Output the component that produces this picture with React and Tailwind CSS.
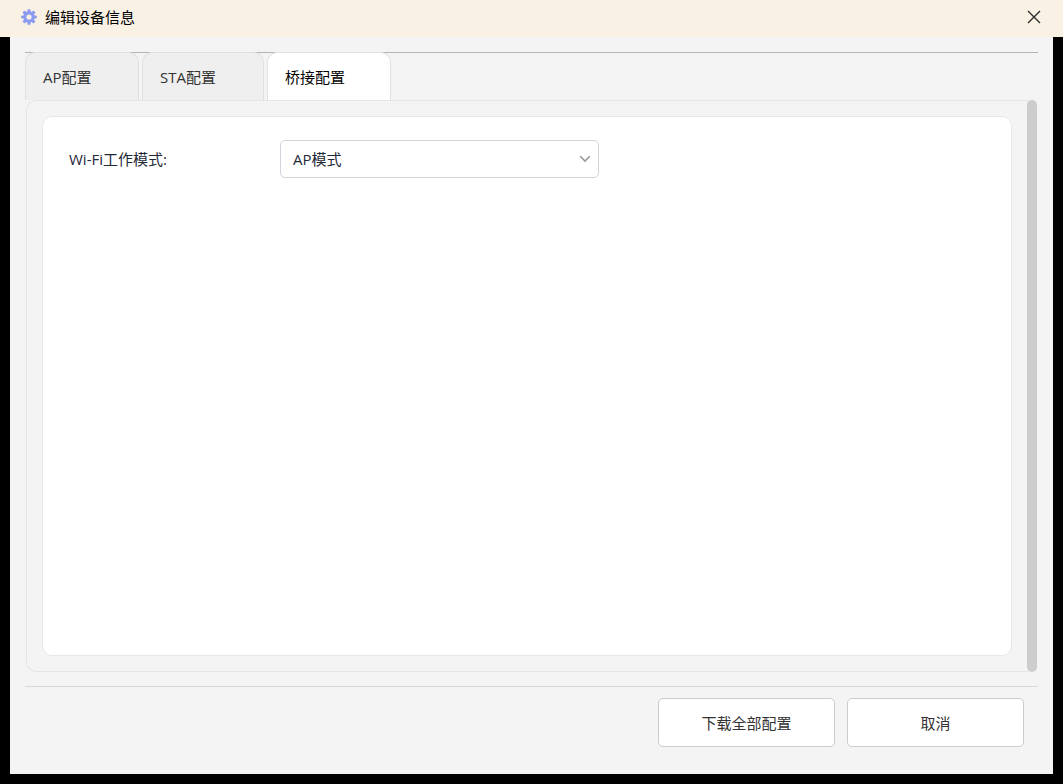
import React, { useState } from 'react';

const tabs = [
  { id: 'ap', label: 'AP配置', width: 'w-[114px]' },
  { id: 'sta', label: 'STA配置', width: 'w-[122px]' },
  { id: 'bridge', label: '桥接配置', width: 'w-[124px]' },
];

const modes = ['AP模式', 'STA模式', '桥接模式'];

const GearIcon = () => (
  <svg viewBox="0 0 16 16" className="h-4 w-4 shrink-0" aria-hidden="true">
    <g fill="#8b9cf0">
      {[0, 45, 90, 135].map((deg) => (
        <rect key={deg} x="6.4" y="0.2" width="3.2" height="15.6" rx="0.9" transform={`rotate(${deg} 8 8)`} />
      ))}
      <circle cx="8" cy="8" r="5.7" />
    </g>
    <circle cx="8" cy="8" r="2.6" fill="#f9f1e4" />
  </svg>
);

const CloseIcon = () => (
  <svg viewBox="0 0 14 14" className="h-3.5 w-3.5" fill="none" stroke="#2b2b2b" strokeWidth="1.4" aria-hidden="true">
    <path d="M1 1l12 12M13 1L1 13" />
  </svg>
);

const ChevronIcon = () => (
  <svg
    viewBox="0 0 12 8"
    className="pointer-events-none absolute top-1/2 right-2 h-2 w-3 -translate-y-1/2"
    fill="none"
    stroke="#999999"
    strokeWidth="1.6"
    aria-hidden="true"
  >
    <path d="M1.2 1.2L6 6l4.8-4.8" />
  </svg>
);

const App = () => {
  const [activeTab, setActiveTab] = useState('bridge');
  const [mode, setMode] = useState('AP模式');

  return (
    <div className="flex min-h-screen flex-col bg-black font-['Open_Sans','Noto_Sans_CJK_SC',sans-serif] text-[15px] leading-5 text-[#333333]">
      <header className="flex h-[37px] items-center gap-2 bg-[#f9f1e4] pr-5 pb-1 pl-[21px]">
        <GearIcon />
        <h1 className="flex-1 text-black">编辑设备信息</h1>
        <button type="button" aria-label="关闭" className="p-0.5">
          <CloseIcon />
        </button>
      </header>

      <main className="mx-2.5 mb-2.5 flex flex-1 flex-col bg-[#f4f4f4] px-[15px] pt-[15px] pb-[27px]">
        <div role="tablist" className="flex gap-[3px] border-t border-[#b4b4b4]">
          {tabs.map((tab) => (
            <button
              key={tab.id}
              id={`tab-${tab.id}`}
              type="button"
              role="tab"
              aria-selected={activeTab === tab.id}
              onClick={() => setActiveTab(tab.id)}
              className={`-mt-px h-12 rounded-t-[10px] border border-b-0 border-[#e0e0e0] pl-[17px] text-left ${tab.width} ${
                activeTab === tab.id ? 'bg-white text-black' : 'bg-[#efefef]'
              }`}
            >
              {tab.label}
            </button>
          ))}
        </div>

        <div
          role="tabpanel"
          aria-labelledby={`tab-${activeTab}`}
          className="mx-px flex flex-1 rounded-[10px] border border-r-0 border-[#e4e5e9]"
        >
          <div className="m-[15px] flex-1 rounded-[10px] border border-[#e8e8ea] bg-white px-[26px] py-[23px]">
            <div className="flex items-center">
              <label htmlFor="wifi-mode" className="w-[211px] text-[#1f2937]">
                Wi-Fi工作模式:
              </label>
              <div className="relative w-[319px]">
                <select
                  id="wifi-mode"
                  value={mode}
                  onChange={(e) => setMode(e.target.value)}
                  className="h-[38px] w-full appearance-none rounded-[5px] border border-[#d1d5db] bg-white px-3 text-[#1f2937]"
                >
                  {modes.map((item) => (
                    <option key={item}>{item}</option>
                  ))}
                </select>
                <ChevronIcon />
              </div>
            </div>
          </div>
          <div className="-my-px w-2.5 rounded-full bg-[#cdcdcd]" />
        </div>

        <footer className="mt-3.5 flex justify-end gap-3 border-t border-[#d9d9d9] pt-[11px] pr-3.5">
          <button type="button" className="h-[49px] w-[177px] rounded-[5px] border border-[#cccccc] bg-white">
            下载全部配置
          </button>
          <button type="button" className="h-[49px] w-[177px] rounded-[5px] border border-[#cccccc] bg-white">
            取消
          </button>
        </footer>
      </main>
    </div>
  );
};

export default App;
